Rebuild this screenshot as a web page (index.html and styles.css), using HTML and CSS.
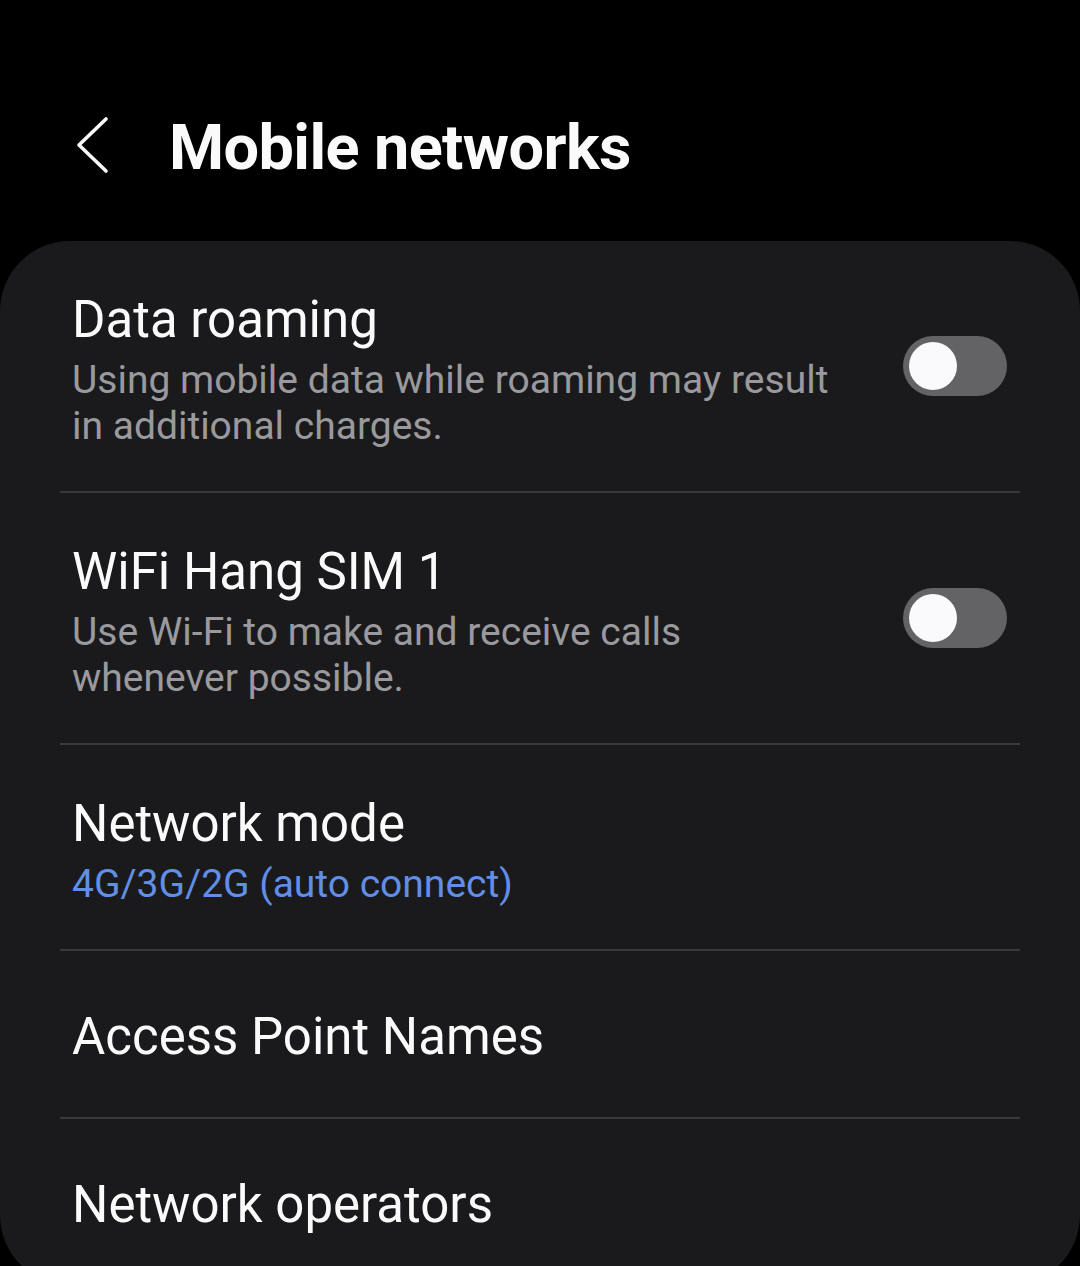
FILE: index.html
```html
<!DOCTYPE html>
<html lang="en">
<head>
    <meta charset="UTF-8">
    <meta name="viewport" content="width=device-width, initial-scale=1.0">
    <title>Mobile networks</title>
    <link rel="stylesheet" href="styles.css">
</head>
<body>

    <header class="app-bar">
        <button class="back" aria-label="Back">
            <svg width="36" height="58" viewBox="0 0 36 58">
                <path d="M33 3 L6 29 L33 55" fill="none" stroke="#fafafa" stroke-width="3.6" stroke-linecap="round" stroke-linejoin="round"/>
            </svg>
        </button>
        <h1>Mobile networks</h1>
    </header>

    <main class="card">
        <ul class="list">
            <li class="item">
                <div class="text">
                    <div class="title">Data roaming</div>
                    <div class="summary">Using mobile data while roaming may result in additional charges.</div>
                </div>
                <span class="switch"><span class="thumb"></span></span>
            </li>
            <li class="item">
                <div class="text">
                    <div class="title">WiFi Hang SIM 1</div>
                    <div class="summary">Use Wi-Fi to make and receive calls whenever possible.</div>
                </div>
                <span class="switch"><span class="thumb"></span></span>
            </li>
            <li class="item">
                <div class="text">
                    <div class="title">Network mode</div>
                    <div class="summary blue">4G/3G/2G (auto connect)</div>
                </div>
            </li>
            <li class="item single">
                <div class="text">
                    <div class="title">Access Point Names</div>
                </div>
            </li>
            <li class="item single">
                <div class="text">
                    <div class="title">Network operators</div>
                </div>
            </li>
        </ul>
    </main>

</body>
</html>
```

FILE: styles.css
```css
body {
    margin: 0;
    background: #000;
    color: #fafafa;
    font-family: Roboto, "Noto Sans", sans-serif;
    overflow: hidden;
}
.app-bar {
    height: 241px;
    display: flex;
    align-items: flex-start;
    padding: 0 0 0 73px;
    box-sizing: border-box;
}
.back {
    background: none;
    border: none;
    padding: 0;
    margin-top: 116px;
    width: 36px;
    height: 58px;
    cursor: pointer;
}
.app-bar h1 {
    margin: 103px 0 0 60px;
    font-size: 63px;
    font-weight: 700;
    line-height: 90px;
    letter-spacing: -0.6px;
}
.card {
    background: #1a1a1c;
    border-radius: 70px;
    padding: 0 60px;
    min-height: 1040px;
}
.list {
    list-style: none;
    margin: 0;
    padding: 0;
}
.item {
    display: flex;
    align-items: center;
    padding: 49px 13px 42px 12px;
    border-bottom: 2px solid #3a3a3c;
}
.item:last-child {
    border-bottom: none;
}
.item.single {
    padding: 56px 13px 50px 12px;
}
.text {
    flex: 1;
    min-width: 0;
    padding-right: 48px;
}
.title {
    font-size: 51px;
    line-height: 60px;
}
.summary {
    margin-top: 7px;
    font-size: 39px;
    line-height: 46px;
    color: #9a9a9e;
}
.summary.blue {
    color: #618ee6;
}
.switch {
    flex: none;
    width: 104px;
    height: 60px;
    margin-bottom: 8px;
    border-radius: 30px;
    background: #636366;
    display: flex;
    align-items: center;
    padding-left: 6px;
    box-sizing: border-box;
}
.thumb {
    width: 48px;
    height: 48px;
    border-radius: 50%;
    background: #fafafc;
}
```
